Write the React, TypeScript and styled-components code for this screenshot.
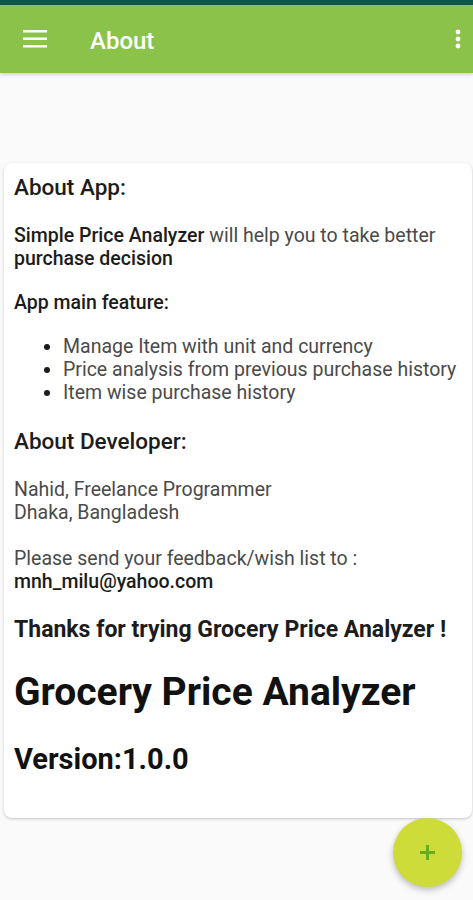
import React from 'react';
import styled, { createGlobalStyle } from 'styled-components';

const GlobalStyle = createGlobalStyle`
  html, body {
    margin: 0;
    padding: 0;
    background: #fafafa;
    font-family: Roboto, "Noto Sans", "Liberation Sans", sans-serif;
  }
`;

const Screen = styled.div`
  position: relative;
  width: 473px;
  height: 900px;
  overflow: hidden;
  background: #fafafa;
`;

const StatusBar = styled.div`
  height: 5px;
  background: #0a584a;
`;

const AppBar = styled.header`
  height: 68px;
  background: #8bc34a;
  display: flex;
  align-items: center;
  padding: 0 12px 0 23px;
  box-shadow: 0 2px 3px rgba(0, 0, 0, 0.15);
`;

const Title = styled.h1`
  flex: 1;
  margin: 4px 0 0 43px;
  color: #fff;
  font-size: 24px;
  font-weight: 500;
  line-height: 28px;
`;

const IconButton = styled.div`
  display: flex;
  align-items: center;
  justify-content: center;
`;

const Main = styled.main`
  padding: 90px 1px 0 4px;
`;

const Card = styled.section`
  background: #fff;
  border-radius: 8px;
  box-shadow: 0 1px 3px rgba(0, 0, 0, 0.22);
  padding: 10px 8px 42px 10px;
`;

const Heading = styled.h2<{ $top?: number }>`
  margin: ${(p) => p.$top ?? 0}px 0 0 0;
  font-size: 22.5px;
  line-height: 28px;
  font-weight: 500;
  color: #1c1c1c;
`;

const SubHeading = styled.h3<{ $top?: number }>`
  margin: ${(p) => p.$top ?? 0}px 0 0 0;
  font-size: 19.5px;
  line-height: 23px;
  font-weight: 500;
  color: #1c1c1c;
`;

const Text = styled.p<{ $top?: number }>`
  margin: ${(p) => p.$top ?? 0}px 0 0 0;
  font-size: 19.5px;
  line-height: 23px;
  color: #4a4a4a;

  b {
    font-weight: 500;
    color: #1c1c1c;
  }
`;

const List = styled.ul<{ $top?: number }>`
  margin: ${(p) => p.$top ?? 0}px 0 0 0;
  padding-left: 49px;
  font-size: 19.5px;
  line-height: 23px;
  color: #4a4a4a;

  li::marker {
    color: #1c1c1c;
  }
`;

const Thanks = styled.p<{ $top?: number }>`
  margin: ${(p) => p.$top ?? 0}px 0 0 0;
  font-size: 23px;
  line-height: 26px;
  font-weight: 700;
  color: #1c1c1c;
`;

const AppName = styled.p<{ $top?: number }>`
  margin: ${(p) => p.$top ?? 0}px 0 0 0;
  font-size: 39px;
  line-height: 44px;
  font-weight: 700;
  color: #111;
`;

const Version = styled.p<{ $top?: number }>`
  margin: ${(p) => p.$top ?? 0}px 0 0 0;
  font-size: 29px;
  line-height: 34px;
  font-weight: 700;
  color: #111;
`;

const Fab = styled.button`
  position: absolute;
  left: 393px;
  top: 818px;
  width: 69px;
  height: 69px;
  border: none;
  border-radius: 50%;
  background: #cddc39;
  box-shadow: 0 3px 6px rgba(0, 0, 0, 0.25);
  display: flex;
  align-items: center;
  justify-content: center;
  padding: 0;
`;

const MenuIcon = () => (
  <svg width="24" height="18" viewBox="0 0 24 18">
    <g fill="#fff">
      <rect x="0" y="0" width="24" height="2.5" />
      <rect x="0" y="7.5" width="24" height="2.5" />
      <rect x="0" y="15" width="24" height="2.5" />
    </g>
  </svg>
);

const MoreIcon = () => (
  <svg width="6" height="20" viewBox="0 0 6 20">
    <g fill="#fff">
      <circle cx="3" cy="3" r="2.4" />
      <circle cx="3" cy="10" r="2.4" />
      <circle cx="3" cy="17" r="2.4" />
    </g>
  </svg>
);

const PlusIcon = () => (
  <svg width="15" height="15" viewBox="0 0 15 15">
    <g fill="#6aac1f">
      <rect x="6" y="0" width="3" height="15" />
      <rect x="0" y="6" width="15" height="3" />
    </g>
  </svg>
);

const App: React.FC = () => {
  return (
    <Screen>
      <GlobalStyle />
      <StatusBar />
      <AppBar>
        <IconButton>
          <MenuIcon />
        </IconButton>
        <Title>About</Title>
        <IconButton>
          <MoreIcon />
        </IconButton>
      </AppBar>
      <Main>
        <Card>
          <Heading>About App:</Heading>
          <Text $top={23}>
            <b>Simple Price Analyzer</b> will help you to take better <b>purchase decision</b>
          </Text>
          <SubHeading $top={21}>App main feature:</SubHeading>
          <List $top={21}>
            <li>Manage Item with unit and currency</li>
            <li>Price analysis from previous purchase history</li>
            <li>Item wise purchase history</li>
          </List>
          <Heading $top={23}>About Developer:</Heading>
          <Text $top={23}>
            Nahid, Freelance Programmer
            <br />
            Dhaka, Bangladesh
          </Text>
          <Text $top={23}>
            Please send your feedback/wish list to :
            <br />
            <b>mnh_milu@yahoo.com</b>
          </Text>
          <Thanks $top={24}>Thanks for trying Grocery Price Analyzer !</Thanks>
          <AppName $top={27}>Grocery Price Analyzer</AppName>
          <Version $top={28}>Version:1.0.0</Version>
        </Card>
      </Main>
      <Fab>
        <PlusIcon />
      </Fab>
    </Screen>
  );
};

export default App;
